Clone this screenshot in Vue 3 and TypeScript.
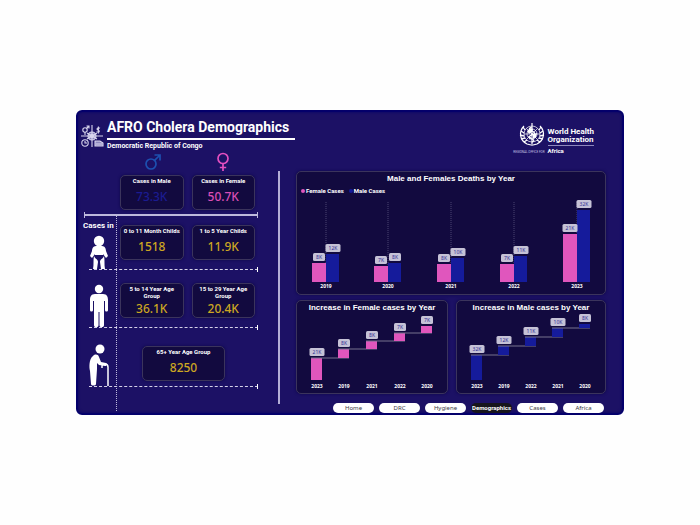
<script setup lang="ts">
interface Bar { x: number; top: number; label: string }
interface YearGroup { year: string; female: Bar; male: Bar }
interface Step { year: string; x: number; top: number; bottom: number; label: string }
interface StepChart { title: string; color: string; width: number; steps: Step[] }
interface Stat { label: string; value: string }
interface AgeRow { figure: 'baby' | 'adult' | 'elder'; stats: Stat[] }

const ageRows: AgeRow[] = [
  { figure: 'baby', stats: [{ label: '0 to 11 Month Childs', value: '1518' }, { label: '1 to 5 Year Childs', value: '11.9K' }] },
  { figure: 'adult', stats: [{ label: '5 to 14 Year Age Group', value: '36.1K' }, { label: '15 to 29 Year Age Group', value: '20.4K' }] },
  { figure: 'elder', stats: [{ label: '65+ Year Age Group', value: '8250' }] },
]

function group(year: string, x: number, fTop: number, fLabel: string, mTop: number, mLabel: string): YearGroup {
  return { year, female: { x: x - 14, top: fTop, label: fLabel }, male: { x, top: mTop, label: mLabel } }
}
const years: YearGroup[] = [
  group('2019', 29, 66, '8K', 57, '12K'),
  group('2020', 91, 69, '7K', 66, '8K'),
  group('2021', 154, 67, '8K', 61, '10K'),
  group('2022', 217, 67, '7K', 59, '11K'),
  group('2023', 280, 37, '21K', 13, '32K'),
]

const stepCharts: StepChart[] = [
  {
    title: 'Increase in Female cases by Year', color: '#e056bd', width: 150,
    steps: [
      { year: '2023', x: 14, top: 44, bottom: 66, label: '21K' },
      { year: '2019', x: 41, top: 35, bottom: 44, label: '8K' },
      { year: '2021', x: 69, top: 27, bottom: 35, label: '8K' },
      { year: '2022', x: 97, top: 19, bottom: 27, label: '7K' },
      { year: '2020', x: 124, top: 12, bottom: 19, label: '7K' },
    ],
  },
  {
    title: 'Increase in Male cases by Year', color: '#151b9b', width: 148,
    steps: [
      { year: '2023', x: 14, top: 41, bottom: 66, label: '32K' },
      { year: '2019', x: 41, top: 32, bottom: 41, label: '12K' },
      { year: '2022', x: 68, top: 23, bottom: 32, label: '11K' },
      { year: '2021', x: 95, top: 14, bottom: 23, label: '10K' },
      { year: '2020', x: 122, top: 10, bottom: 14, label: '8K' },
    ],
  },
]

const badgeWidth = (label: string): number => (label.length > 2 ? 15 : 12)
const pages: string[] = ['Home', 'DRC', 'Hygiene', 'Demographics', 'Cases', 'Africa']
const activePage = 'Demographics'
</script>

<template>
  <main class="page">
    <div class="board">
      <header class="header">
        <svg class="mark" viewBox="0 0 24 24" fill="none" stroke="#d9d6ee" stroke-width="1.1">
          <circle cx="12" cy="12" r="4" fill="#8d88bd" />
          <circle cx="12" cy="12" r="1.6" fill="#fff" />
          <path d="M12 1v22M1 12h22M7 9l10 6M17 9l-10 6" />
          <circle cx="5" cy="6" r="2.2" /><path d="M6.500 4.500L9 2M6.500 2H9v2.500M5 8v3" />
          <path d="M20 4.200c-2.500-1.200-4 1-2 1.800s2 2.800-1.500 1.800M18.400 2.500v7" />
          <circle cx="5" cy="19" r="3.200" /><path d="M5 17v2h2" />
          <path d="M15 17h5l3 2v3h-8zM16 20h6" fill="#8d88bd" />
        </svg>
        <div class="heading">
          <h1>AFRO Cholera Demographics</h1>
          <p>Democratic Republic of Congo</p>
        </div>
        <div class="who">
          <div class="who-side">
            <svg class="emblem" viewBox="0 0 26 26" fill="none" stroke="#fff">
              <g stroke-width=".7">
                <circle cx="13" cy="12" r="8" /><circle cx="13" cy="12" r="5" />
                <path d="M5 12h16M7.500 6.500l11 11M18.500 6.500l-11 11" />
              </g>
              <path d="M8 9l3-3 3 1-1 3-3 2zM14 12l4-1-1 4-3 2zM9 14l3 1-1 3z" fill="#fff" stroke="none" />
              <path d="M13 1v23" stroke-width="1.200" />
              <path d="M13 5c-4 1-3 3 0 4s4 3 0 4-3 3 0 4 2 2 0 3" stroke-width="1.100" />
              <path d="M5 4C0 9 0 18 8 22l4 1M21 4c5 5 5 14-3 18l-4 1" stroke-width="1.200" />
              <path d="M4 5l2 3M2 9l3 2M1 13l4 1M2 17l4-1M5 20l3-2M22 5l-2 3M24 9l-3 2M25 13l-4 1M24 17l-4-1M21 20l-3-2" stroke-width="1.300" />
            </svg>
            <span class="office">REGIONAL OFFICE FOR</span>
          </div>
          <div class="who-text">
            <strong>World Health<br>Organization</strong>
            <b>Africa</b>
          </div>
        </div>
      </header>

      <div class="body">
        <section class="people">
          <div class="gender-row">
            <div class="gender">
              <svg class="sign" viewBox="0 0 18 20" fill="none" stroke="#1d50b0" stroke-width="1.700">
                <circle cx="8" cy="12" r="5" /><path d="M11.600 8.400L17 3M11.500 3H17v5.500" />
              </svg>
              <article class="stat male"><h2>Cases in Male</h2><strong>73.3K</strong></article>
            </div>
            <div class="gender">
              <svg class="sign" viewBox="0 0 18 20" fill="none" stroke="#e34fc0" stroke-width="1.700">
                <circle cx="9" cy="6.500" r="5" /><path d="M9 11.500V19M5.800 15.500h6.400" />
              </svg>
              <article class="stat female"><h2>Cases in Female</h2><strong>50.7K</strong></article>
            </div>
          </div>

          <div class="ages">
            <div v-for="row in ageRows" :key="row.figure" class="age-row" :class="row.figure">
              <div class="figure">
                <span v-if="row.figure === 'baby'" class="cases-in">Cases in</span>
                <svg v-if="row.figure === 'baby'" class="person" viewBox="0 0 20 34" fill="#fff">
                  <circle cx="10" cy="6" r="5.200" />
                  <path d="M7 11h6c3 0 4 3 4 5l2 5-2 2-3-4v1H6v-1l-3 4-2-2 2-5c0-2 1-5 4-5z" />
                  <path d="M5 21c1 3 4 3 4 6l-1 7H4c1-4 0-9 1-13zM15 21c-1 3-4 3-4 6l1 7h4c-1-4 0-9-1-13z" />
                </svg>
                <svg v-else-if="row.figure === 'adult'" class="person tall" viewBox="0 0 20 43" fill="#fff">
                  <circle cx="10" cy="5" r="4.200" />
                  <path d="M6 10h8c4 0 5 3 5 6v10c0 2-3 2-3 0v-9h-1v24c0 3-4.500 3-4.500 0V28h-1v13c0 3-4.500 3-4.500 0V17H4v9c0 2-3 2-3 0V16c0-3 1-6 5-6z" />
                </svg>
                <svg v-else class="person tall" viewBox="0 0 20 43" fill="#fff">
                  <circle cx="11" cy="6" r="4.500" />
                  <path d="M4 13c2-2 5-2 6 1l2 5 5 1c2 1 1 3-1 3l-6-1-2-2v6l-1 15c0 2-5 2-5 0l-1-13C0 24 0 16 4 13z" />
                  <path d="M13 25v-2c0-3 6-3 6 1v19" fill="none" stroke="#fff" stroke-width="1.500" />
                </svg>
              </div>
              <div class="cards">
                <article v-for="stat in row.stats" :key="stat.label" class="stat">
                  <h2>{{ stat.label }}</h2><strong>{{ stat.value }}</strong>
                </article>
              </div>
            </div>
          </div>
        </section>

        <section class="charts">
          <article class="chart">
            <h2>Male and Females Deaths by Year</h2>
            <div class="legend">
              <span class="key pink">Female Cases</span><span class="key blue">Male Cases</span>
            </div>
            <svg class="plot" viewBox="0 0 308 97">
              <g v-for="g in years" :key="g.year">
                <path class="guide" :d="`M${g.male.x} 5V85`" />
                <rect :x="g.female.x" :y="g.female.top" width="14" :height="85 - g.female.top" fill="#e056bd" />
                <rect :x="g.male.x" :y="g.male.top" width="13" :height="85 - g.male.top" fill="#151b9b" />
                <g v-for="bar in [g.female, g.male]" :key="bar.x">
                  <rect class="badge" :x="bar.x + 7 - badgeWidth(bar.label) / 2" :y="bar.top - 10" :width="badgeWidth(bar.label)" height="8" rx="1.500" />
                  <text class="badge-text" :x="bar.x + 7" :y="bar.top - 4">{{ bar.label }}</text>
                </g>
                <text class="tick" :x="g.male.x" y="91">{{ g.year }}</text>
              </g>
            </svg>
          </article>

          <div class="pair">
            <article v-for="chart in stepCharts" :key="chart.title" class="chart">
              <h2>{{ chart.title }}</h2>
              <svg class="plot" :viewBox="`0 0 ${chart.width} 79`">
                <g v-for="(s, i) in chart.steps" :key="s.year">
                  <rect :x="s.x" :y="s.top" width="11" :height="s.bottom - s.top" :fill="chart.color" />
                  <path v-if="i < chart.steps.length - 1" class="link" :d="`M${s.x} ${s.top}H${chart.steps[i + 1].x + 11}`" />
                  <rect class="badge" :x="s.x + 6 - badgeWidth(s.label) / 2" :y="s.top - 10" :width="badgeWidth(s.label)" height="8" rx="1.500" />
                  <text class="badge-text" :x="s.x + 6" :y="s.top - 4">{{ s.label }}</text>
                  <text class="tick" :x="s.x + 6" y="74">{{ s.year }}</text>
                </g>
              </svg>
            </article>
          </div>

          <nav class="pages">
            <button v-for="page in pages" :key="page" type="button" :class="{ active: page === activePage }">{{ page }}</button>
          </nav>
        </section>
      </div>
    </div>
  </main>
</template>

<style>
body { background: #fefefe; }
</style>

<style scoped>
* { box-sizing: border-box; }
h1, h2, p { margin: 0; }
svg { display: block; }

.page {
  min-height: 100vh;
  padding: 24px 76px;
  display: flex;
  align-items: center;
  font-family: "Liberation Sans", Arial, sans-serif;
  color: #fff;
}
.board {
  flex: 1;
  min-width: 0;
  background: #1c1165;
  border: 2px solid #04006b;
  border-radius: 6px;
  box-shadow: inset 0 0 3px #04006b;
}

.header {
  display: flex;
  align-items: flex-start;
  padding: 7px 28px 0 2px;
  height: 40px;
  font-family: Roboto, "Noto Sans", sans-serif;
}
.mark { width: 24px; height: 24px; margin-top: 5px; }
.heading { margin-left: 3px; }
.heading h1 {
  font-size: 14px;
  line-height: 17px;
  padding: 0 6px 2px 0;
  border-bottom: 2px solid #fff;
}
.heading p { font-size: 7px; line-height: 12px; font-weight: 700; }
.who { margin-left: auto; padding-top: 3px; display: flex; gap: 3px; }
.who-side { display: flex; flex-direction: column; align-items: flex-end; width: 26px; }
.emblem { width: 26px; height: 26px; }
.office { font-size: 3px; line-height: 8px; white-space: nowrap; color: #c9c5e6; }
.who-text { padding-top: 6px; font-size: 8px; line-height: 8px; }
.who-text strong { display: block; padding-bottom: 1px; border-bottom: 1px solid #8d88bd; }
.who-text b { display: block; font-size: 6px; line-height: 9px; }

.body { display: grid; grid-template-columns: 202px minmax(0, 1fr); }
.people { padding: 0 22px 0 6px; position: relative; }
.people::after {
  content: "";
  position: absolute;
  right: 0;
  top: 19px;
  bottom: 9px;
  width: 2px;
  background: #b4afd6;
}
.gender-row {
  display: grid;
  grid-template-columns: 1fr 1fr;
  gap: 8px;
  padding: 0 3px 4px 36px;
}
.gender { display: flex; flex-direction: column; align-items: center; gap: 3px; }
.sign { width: 18px; height: 20px; }
.stat {
  width: 100%;
  height: 35px;
  background: #120a3f;
  border: 1px solid #3b345c;
  border-radius: 5px;
  box-shadow: 0 0 3px #0d0748;
  text-align: center;
  display: flex;
  flex-direction: column;
  align-items: center;
}
.stat h2 { font: 700 6px/7px Roboto, sans-serif; padding: 1px 2px 0; }
.stat strong {
  margin: auto 0;
  font: 500 12px/15px "Noto Sans", sans-serif;
  color: #cca622;
}
.stat.male strong { color: #1b1b91; }
.stat.female strong { color: #d94db5; }

.ages { position: relative; padding-bottom: 24px; border-top: 2px solid #bdb9dc; }
.ages::before, .ages::after { content: ""; position: absolute; }
.ages::before { left: 32px; top: 0; bottom: 0; border-left: 1px dotted #bdb9dc; }
.ages::after { left: 0; right: 0; top: -4px; height: 6px; border: solid #bdb9dc; border-width: 0 1px; }
.age-row {
  display: grid;
  grid-template-columns: 31px minmax(0, 1fr);
  margin-left: 5px;
  position: relative;
  border-bottom: 1px dashed #d4d1e8;
  height: 58px;
}
.age-row.baby { height: 54px; }
.age-row.elder { height: 59px; }
.age-row::after { content: ""; position: absolute; right: 0; bottom: -3px; height: 5px; border-right: 1px solid #fff; }
.figure { display: flex; flex-direction: column; justify-content: flex-end; }
.cases-in { font: 700 8px/10px Roboto, sans-serif; white-space: nowrap; margin-left: -6px; margin-bottom: 4px; }
.person { width: 20px; height: 34px; }
.person.tall { height: 43px; }
.cards { display: flex; justify-content: center; gap: 8px; align-items: flex-end; padding: 0 3px 9px 0; }
.elder .cards { padding: 0 33px 5px 22px; }

.charts { padding: 19px 16px 0; }
.chart {
  background: #120a3f;
  border: 1px solid #3b345c;
  border-radius: 5px;
  box-shadow: 0 0 3px #0d0748;
}
.chart h2 { font-size: 8px; line-height: 13px; text-align: center; white-space: nowrap; }
.legend { display: flex; gap: 5px; padding-left: 4px; height: 12px; font: 700 6px/12px Roboto, sans-serif; }
.key::before { content: ""; display: inline-block; width: 4px; height: 4px; margin-right: 1px; border-radius: 50%; background: #151b9b; }
.key.pink::before { background: #e056bd; }
.plot { width: 100%; height: auto; }
.guide { stroke: #4b4572; stroke-width: 1; stroke-dasharray: 1 1; }
.link { stroke: #77728f; stroke-width: 1; fill: none; }
.badge { fill: #c5c2d6; }
.badge-text { font: 5px "Noto Sans", sans-serif; fill: #302b94; text-anchor: middle; }
.tick { font: 700 5px "Noto Sans", sans-serif; fill: #fff; text-anchor: middle; }
.pair { display: grid; grid-template-columns: 152fr 150fr; gap: 8px; margin-top: 5px; }

.pages { display: grid; grid-template-columns: repeat(6, 41px); gap: 5px; justify-content: end; padding: 9px 2px 0 0; }
.pages button {
  height: 10px;
  padding: 0;
  border: 0;
  border-radius: 5px;
  background: #fff;
  color: #3a3944;
  font: 6px/10px "Noto Sans", sans-serif;
}
.pages button.active { background: #17151c; color: #fff; font: 700 6px/10px Roboto, sans-serif; }
</style>
